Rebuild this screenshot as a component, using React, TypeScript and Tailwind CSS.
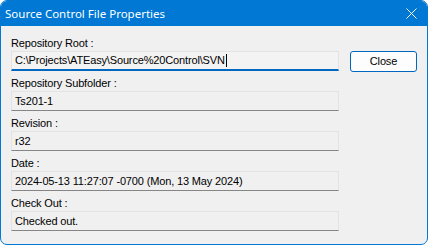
const fields = [
  { label: "Repository Root :", value: "C:\\Projects\\ATEasy\\Source%20Control\\SVN", focused: true },
  { label: "Repository Subfolder :", value: "Ts201-1" },
  { label: "Revision :", value: "r32" },
  { label: "Date :", value: "2024-05-13 11:27:07 -0700 (Mon, 13 May 2024)" },
  { label: "Check Out :", value: "Checked out." },
];

export default function App() {
  return (
    <div className="w-[428px] h-[245px] bg-white">
      <div className="w-full h-full flex flex-col rounded-[7px] overflow-hidden border border-[#0078d4] bg-[#f0f0f0]">
        {/* Title bar */}
        <div className="h-[25px] shrink-0 bg-[#0078d4] flex items-center justify-between pl-[4px] pr-[8px]">
          <span className="text-white text-[11.5px] font-['Noto_Sans',sans-serif] leading-none">
            Source Control File Properties
          </span>
          <svg width="11" height="11" viewBox="0 0 11 11" className="mr-[2px]">
            <path d="M0.5 0.5L10.5 10.5M10.5 0.5L0.5 10.5" stroke="white" strokeWidth="1" />
          </svg>
        </div>

        {/* Body */}
        <div className="flex pl-[10px] pt-[5px] font-['Liberation_Sans',Arial,sans-serif] text-[11px] tracking-[-0.15px] text-black">
          <div className="w-[328px] flex flex-col">
            {fields.map((f, i) => (
              <div key={i} className="flex flex-col">
                <div className="h-[20px] flex items-end pb-[1px] leading-[13px]">{f.label}</div>
                <div
                  className={
                    f.focused
                      ? "h-[20px] flex items-center pl-[3px] border border-[#e3e3e3] border-b-2 border-b-[#0067c0] bg-[#f3f3f3] leading-none"
                      : "h-[20px] flex items-center pl-[3px] border border-[#e3e3e3] border-b-[#868686] bg-[#f0f0f0] leading-none"
                  }
                >
                  <span>{f.value}</span>
                  {f.focused && <span className="w-px h-[13px] bg-black ml-px" />}
                </div>
              </div>
            ))}
          </div>
          <div className="pl-[11px] pt-[20px]">
            <button className="w-[67px] h-[21px] rounded-[3px] border border-[#0067c0] bg-[#fdfdfd] text-[11px] leading-none flex items-center justify-center">
              Close
            </button>
          </div>
        </div>
      </div>
    </div>
  );
}
